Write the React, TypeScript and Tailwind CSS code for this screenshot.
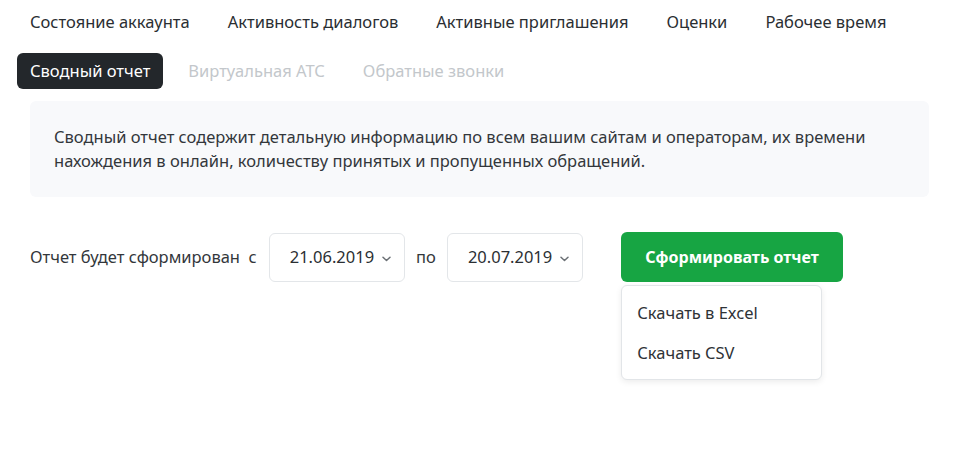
import { useState } from 'react';

const topTabs = ['Состояние аккаунта', 'Активность диалогов', 'Активные приглашения', 'Оценки', 'Рабочее время'];

function Chevron() {
  return (
    <svg width="9" height="6" viewBox="0 0 9 6" fill="none" className="ml-2 mt-[2px] text-[#6b7075]">
      <path d="M1 1.2l3.5 3.3L8 1.2" stroke="currentColor" strokeWidth="1.5" strokeLinecap="round" strokeLinejoin="round" />
    </svg>
  );
}

function DateSelect({ value }: { value: string }) {
  return (
    <button
      type="button"
      className="flex h-[49px] items-center rounded-md border border-[#e3e6e9] bg-white pl-5 pr-[13px] text-[16.5px] text-[#2b2f33]"
    >
      <span>{value}</span>
      <Chevron />
    </button>
  );
}

export default function App() {
  const [open] = useState(true);

  return (
    <div className="min-h-[451px] bg-white px-[30px] pt-1 text-[16.5px] text-[#24282c]" style={{ fontFamily: '"Noto Sans", "Open Sans", sans-serif' }}>
      {/* Tabs */}
      <nav className="-ml-[13px] flex flex-col gap-[13px]">
        <div className="flex gap-3">
          {topTabs.map((tab) => (
            <a key={tab} className="flex h-9 items-center rounded-md px-[13px] text-[#2a2e32]">
              {tab}
            </a>
          ))}
        </div>
        <div className="flex gap-3">
          <a className="flex h-9 items-center rounded-md bg-[#23272b] px-[13px] text-white">Сводный отчет</a>
          <a className="flex h-9 items-center rounded-md px-[13px] text-[#c3c7cb]">Виртуальная АТС</a>
          <a className="flex h-9 items-center rounded-md px-[13px] text-[#c3c7cb]">Обратные звонки</a>
        </div>
      </nav>

      {/* Description */}
      <div className="mt-3 rounded-md bg-[#f8f9fb] p-6 leading-6 text-[#33373b]">
        Сводный отчет содержит детальную информацию по всем вашим сайтам и операторам, их времени
        <br />
        нахождения в онлайн, количеству принятых и пропущенных обращений.
      </div>

      {/* Report form */}
      <div className="mt-[36px] flex items-center">
        <span className="text-[#33373b]">Отчет будет сформирован&nbsp; с</span>
        <div className="ml-3">
          <DateSelect value="21.06.2019" />
        </div>
        <span className="mx-[11px] text-[#33373b]">по</span>
        <DateSelect value="20.07.2019" />
        <div className="relative ml-[38px] -mt-[2px]">
          <button
            type="button"
            className="flex h-[50px] items-center rounded-md bg-[#17a543] px-6 text-[16px] font-bold text-white"
          >
            Сформировать отчет
          </button>
          {open && (
            <div className="absolute left-0 top-[53px] w-[201px] rounded-md border border-[#e2e5e8] bg-white pb-[5px] pt-2 shadow-[0_2px_6px_rgba(0,0,0,0.08)]">
              <div className="flex h-10 items-center px-[15px] text-[#2e3236]">Скачать в Excel</div>
              <div className="flex h-10 items-center px-[15px] text-[#2e3236]">Скачать CSV</div>
            </div>
          )}
        </div>
      </div>
    </div>
  );
}
